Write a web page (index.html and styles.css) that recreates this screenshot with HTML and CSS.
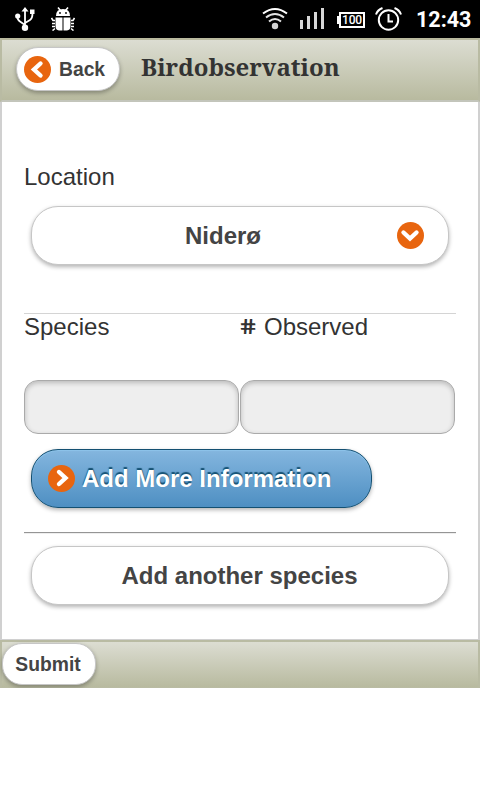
FILE: index.html
```
<!DOCTYPE html>
<html lang="en">
<head>
<meta charset="utf-8">
<title>Birdobservation</title>
<link rel="stylesheet" href="styles.css">
</head>
<body>
<div class="status">
  <svg class="usb" width="20" height="24" viewBox="0 0 20 24" fill="none" stroke="#fff" stroke-width="1.8"><path d="M10 4v17M10 18 5 14.500Q2.500 13 2.500 10M10 16l5-3Q17.500 11.500 17.500 6"/><path d="M10 0l3.500 4.500h-7zM15 2.500h4.500v4.500H15z" fill="#fff" stroke="none"/><circle cx="2.700" cy="9" r="2.600" fill="#fff" stroke="none"/><circle cx="10" cy="20.800" r="3.200" fill="#fff" stroke="none"/></svg>
  <svg class="bug" width="24" height="24" viewBox="0 0 24 24" fill="#fff"><path d="M5 9Q5 2 12 2t7 7zM4.500 10.500h7v13H8Q4.500 23 4.500 19zM12.500 10.500h7V19q0 4-3.500 4.500h-3.500z"/><path d="M7 .5l2.500 3M17 .5l-2.500 3M4 13.500H2L.5 11M4 16.500H1M4 19.500H1M4 21.500l-2.500 2M20 13.500h2l1.500-2.500M20 16.500h3M20 19.500h3M20 21.500l2.500 2" fill="none" stroke="#fff" stroke-width="1.600"/><circle cx="9" cy="6" r=".9" fill="#000"/><circle cx="15" cy="6" r=".9" fill="#000"/></svg>
  <span class="grow"></span>
  <svg class="wifi" width="26" height="24" viewBox="0 0 26 24" fill="none" stroke="#e4e4e4" stroke-width="2"><path d="M1 6.500Q13-2.500 25 6.500" stroke="#fff"/><path d="M4 10.500Q13 3.500 22 10.500M7 14.500Q13 9.500 19 14.500"/><circle cx="13" cy="19" r="3.200" fill="#d4d4d4" stroke="none"/></svg>
  <svg class="signal" width="25" height="22" viewBox="0 0 25 22" fill="#d8d8d8"><path d="M0 12h3v9H0zM7 8h3v13H7zM14 4h3v17h-3zM21 0h3v21h-3z"/></svg>
  <div class="battery"><span>100</span></div>
  <svg class="alarm" width="27" height="25" viewBox="0 0 27 25" fill="none" stroke="#fff" stroke-width="2"><circle cx="13.500" cy="13" r="9.700"/><path d="M13.500 7v7.500H18M1 7.500Q2.500 3 7.500 1M26 7.500Q24.500 3 19.500 1"/></svg>
  <span class="clock">12:43</span>
</div>
<header class="bar header">
  <a class="btn small back"><svg width="27" height="27" viewBox="0 0 27 27"><circle cx="13.500" cy="13.500" r="13.500" fill="#e8650f"/><path d="M16.500 7.500 10 13.500l6.500 6" fill="none" stroke="#fff" stroke-width="4.400" stroke-linecap="round"/></svg><span>Back</span></a>
  <h1>Birdobservation</h1>
</header>
<main>
  <label class="location">Location</label>
  <a class="btn wide select"><span>Niderø</span><svg width="27" height="27" viewBox="0 0 27 27"><circle cx="13.500" cy="13.500" r="13.500" fill="#e8650f"/><path d="M6.500 10.500l6.500 6 6.500-6" fill="none" stroke="#fff" stroke-width="4.400" stroke-linecap="round"/></svg></a>
  <section class="columns">
    <div><label>Species</label><div class="field"></div></div>
    <div><label><span class="hash">#</span>Observed</label><div class="field"></div></div>
  </section>
  <a class="btn wide blue"><svg width="27" height="27" viewBox="0 0 27 27"><circle cx="13.500" cy="13.500" r="13.500" fill="#e8650f"/><path d="M11 7l6.500 6-6.500 6" fill="none" stroke="#fff" stroke-width="4.400" stroke-linecap="round"/></svg><span>Add More Information</span></a>
  <hr>
  <a class="btn wide another"><span>Add another species</span></a>
</main>
<footer class="bar footer"><a class="btn small submit">Submit</a></footer>
</body>
</html>
```
FILE: styles.css
```
* { box-sizing: border-box; }
body { margin: 0; background: #fff; color: #333; font: 24px/28px "Liberation Sans", Arial, sans-serif; }
svg { display: block; flex: none; }
.status { display: flex; align-items: flex-start; height: 38px; padding: 7px 8px 0 15px; background: #000; }
.bug { margin-left: 16px; }
.grow { flex: 1; }
.signal { margin: 1px 0 0 12px; }
.battery { position: relative; display: flex; justify-content: center; align-items: center; width: 26px; height: 16px; margin: 5px 0 0 14px; border: 2px solid #fff; }
.battery::before { content: ""; position: absolute; left: -4px; top: 2px; width: 3px; height: 8px; background: #fff; }
.battery span { color: #fff; font: 500 12px/12px Roboto, sans-serif; letter-spacing: -.2px; }
.alarm { margin-left: 10px; }
.clock { width: 56px; margin-left: 14px; color: #fff; font: bold 21.5px/26px Roboto, sans-serif; white-space: nowrap; }
.bar { display: flex; border: 2px solid #b9bba3; background: linear-gradient(#dcddd2, #b8ba9f); }
.header { height: 64px; padding: 7px 0 0 14px; border-color: #b9b99e #b9bba3 #c3c5bb; }
h1 { margin: 5px 0 0 21px; color: #333; font: bold 24px/30px "Noto Serif", "DejaVu Serif Condensed", "DejaVu Serif", serif; white-space: nowrap; }
.btn { display: flex; align-items: center; color: #444; font-weight: bold; background: #fff; border: 1px solid #c6c6c6; box-shadow: 0 2px 4px rgba(0, 0, 0, .3); white-space: nowrap; }
.small { font-size: 19.3px; }
.back { width: 104px; height: 44px; padding-left: 7px; border-radius: 22px; gap: 8px; }
.back span { padding-top: 2px; }
main { height: 538px; padding: 61px 22px 0; border: solid #d0d0d0; border-width: 0 2px 1px; }
label { display: flex; height: 27px; line-height: 27px; }
.wide { justify-content: center; width: 418px; height: 59px; margin-left: 7px; border-radius: 27px; }
.select { display: grid; grid-template-columns: 1fr 27px; margin-top: 16px; padding: 0 24px 0 17px; }
.select span { text-align: center; }
.columns { display: grid; grid-template-columns: 215px 215px; gap: 1px; margin-top: 48px; border-top: 1px solid #d4d4d4; }
.columns label { height: 25px; line-height: 25px; }
.hash { width: 24px; font: 600 21px/25px "Noto Sans", sans-serif; transform: skewX(10deg) scaleX(1.2); transform-origin: 0 50%; }
.field { width: 215px; height: 54px; margin-top: 41px; background: #eee; border: 1px solid #aaa; border-radius: 14px; box-shadow: inset 0 2px 5px rgba(0, 0, 0, .22); }
.blue { width: 341px; margin-top: 15px; padding: 0 38px 0 16px; justify-content: flex-start; gap: 7px; color: #fff; background: linear-gradient(#84b6df, #4e8fc2); border-color: #145072; text-shadow: 0 -2px 1px #145072; box-shadow: 0 2px 4px rgba(0, 0, 0, .3), inset 0 1px 1px #8dc4ea; }
hr { width: 432px; height: 2px; margin: 24px 0 12px; border: 0; border-top: 1px solid #959595; border-bottom: 1px solid #eee; }
.another { padding-right: 1px; }
.footer { height: 48px; border-bottom-width: 1px; }
.submit { width: 94px; height: 42px; margin-top: 1px; padding: 2px 2px 0 0; border-radius: 20px; justify-content: center; }
```
